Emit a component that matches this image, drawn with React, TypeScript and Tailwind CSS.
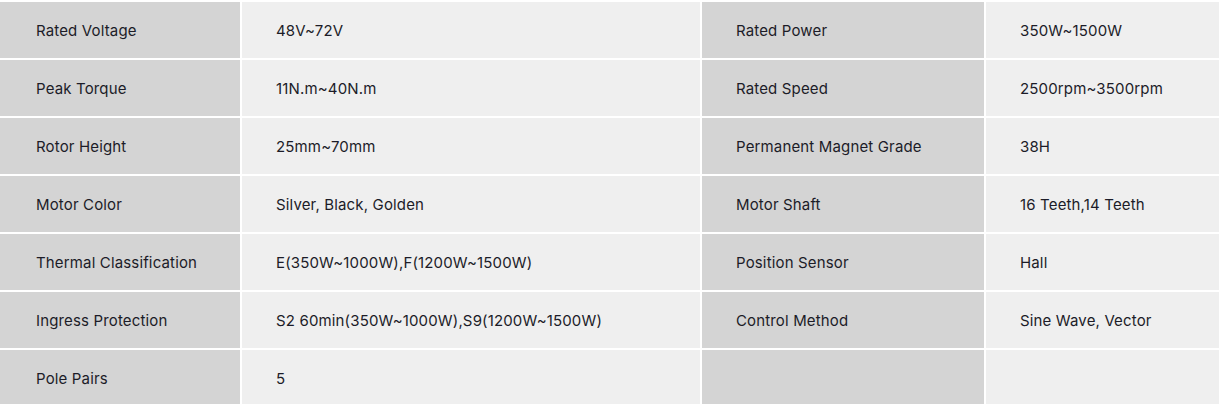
import React from "react";

const rows: [string, string, string, string][] = [
  ["Rated Voltage", "48V~72V", "Rated Power", "350W~1500W"],
  ["Peak Torque", "11N.m~40N.m", "Rated Speed", "2500rpm~3500rpm"],
  ["Rotor Height", "25mm~70mm", "Permanent Magnet Grade", "38H"],
  ["Motor Color", "Silver, Black, Golden", "Motor Shaft", "16 Teeth,14 Teeth"],
  ["Thermal Classification", "E(350W~1000W),F(1200W~1500W)", "Position Sensor", "Hall"],
  ["Ingress Protection", "S2 60min(350W~1000W),S9(1200W~1500W)", "Control Method", "Sine Wave, Vector"],
  ["Pole Pairs", "5", "", ""],
];

export default function App() {
  return (
    <div className="w-[1219px] h-[404px] overflow-hidden bg-white pt-[2px]" style={{ fontFamily: "Inter, 'Noto Sans', sans-serif" }}>
      <div className="grid grid-cols-[240px_458px_282px_1fr] gap-[2px] text-[15px] tracking-[0.15px] text-[#1c1c28]">
        {rows.map((r, i) => (
          <React.Fragment key={i}>
            <div className="h-[56px] flex items-center pl-[36px] pt-[2px] bg-[#d4d4d4]">{r[0]}</div>
            <div className="h-[56px] flex items-center pl-[34px] pt-[2px] bg-[#efefef]">{r[1]}</div>
            <div className="h-[56px] flex items-center pl-[34px] pt-[2px] bg-[#d4d4d4]">{r[2]}</div>
            <div className="h-[56px] flex items-center pl-[34px] pt-[2px] bg-[#efefef]">{r[3]}</div>
          </React.Fragment>
        ))}
      </div>
    </div>
  );
}
